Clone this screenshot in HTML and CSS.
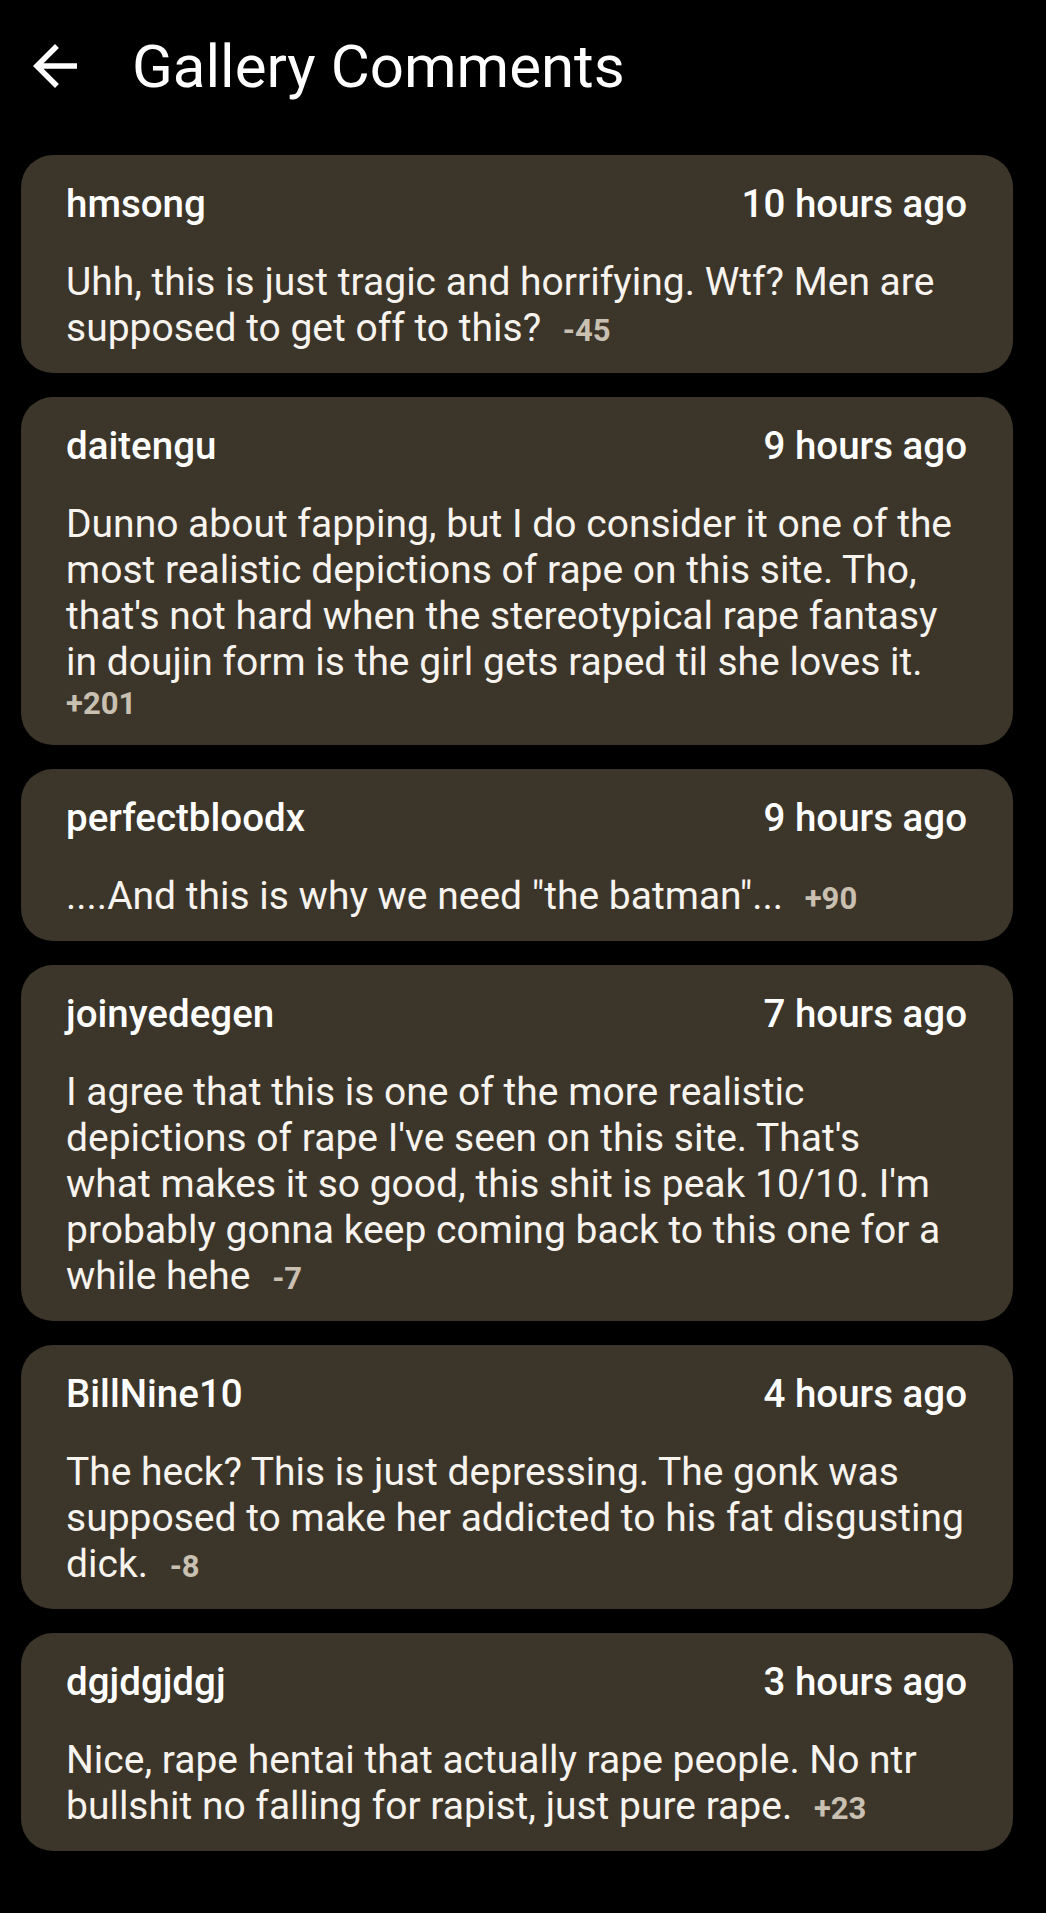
FILE: index.html
```html
<!DOCTYPE html>
<html lang="en">
<head>
    <meta charset="UTF-8">
    <meta name="viewport" content="width=device-width, initial-scale=1.0">
    <title>Gallery Comments</title>
    <link rel="stylesheet" href="styles.css">
</head>
<body>
    <header class="topbar">
        <button class="back" aria-label="Back">
            <svg viewBox="0 0 24 24" width="66" height="66"><path fill="#fff" d="M20 11H7.83l5.59-5.59L12 4l-8 8 8 8 1.41-1.41L7.83 13H20v-2z"/></svg>
        </button>
        <h1>Gallery Comments</h1>
    </header>
    <main class="list">
        <div class="card">
            <div class="head"><span class="user">hmsong</span><span class="time">10 hours ago</span></div>
            <p class="body"><span class="text">Uhh, this is just tragic and horrifying. Wtf? Men are supposed to get off to this?</span> <span class="score">-45</span></p>
        </div>
        <div class="card">
            <div class="head"><span class="user">daitengu</span><span class="time">9 hours ago</span></div>
            <p class="body"><span class="text">Dunno about fapping, but I do consider it one of the most realistic depictions of rape on this site. Tho, that's not hard when the stereotypical rape fantasy in doujin form is the girl gets raped til she loves it.</span> <span class="score">+201</span></p>
        </div>
        <div class="card">
            <div class="head"><span class="user">perfectbloodx</span><span class="time">9 hours ago</span></div>
            <p class="body"><span class="text">....And this is why we need "the batman"...</span> <span class="score">+90</span></p>
        </div>
        <div class="card">
            <div class="head"><span class="user">joinyedegen</span><span class="time">7 hours ago</span></div>
            <p class="body"><span class="text">I agree that this is one of the more realistic depictions of rape I've seen on this site. That's<br>what makes it so good, this shit is peak 10/10. I'm probably gonna keep coming back to this one for a while hehe</span> <span class="score">-7</span></p>
        </div>
        <div class="card">
            <div class="head"><span class="user">BillNine10</span><span class="time">4 hours ago</span></div>
            <p class="body"><span class="text">The heck? This is just depressing. The gonk was supposed to make her addicted to his fat disgusting dick.</span> <span class="score">-8</span></p>
        </div>
        <div class="card">
            <div class="head"><span class="user">dgjdgjdgj</span><span class="time">3 hours ago</span></div>
            <p class="body"><span class="text">Nice, rape hentai that actually rape people. No ntr bullshit no falling for rapist, just pure rape.</span> <span class="score">+23</span></p>
        </div>
    </main>
</body>
</html>
```

FILE: styles.css
```css
*{
    margin:0;
    padding:0;
    box-sizing: border-box;
}
body{
    background-color: #000;
    color: #f7f3ee;
    font-family: Roboto, "Noto Sans", sans-serif;
}

.topbar{
    height: 132px;
    display: flex;
    align-items: center;
    padding-left: 22px;
}
.back{
    width: 66px;
    height: 66px;
    border: none;
    background: none;
    display: flex;
}
.topbar h1{
    margin-left: 44px;
    font-size: 60px;
    font-weight: 400;
    color: #fff;
}

.list{
    display: flex;
    flex-direction: column;
    gap: 24px;
    padding: 23px 33px 40px 21px;
}
.card{
    background-color: #3c352a;
    border-radius: 32px;
    padding: 26px 46px 22px 45px;
}
.head{
    display: flex;
    justify-content: space-between;
    font-size: 38.5px;
    line-height: 46px;
    font-weight: 500;
    color: #fff;
}
.body{
    margin-top: 32px;
    font-size: 31px;
    line-height: 38px;
    word-spacing: 14px;
}
.text{
    font-size: 39px;
    line-height: 46px;
    word-spacing: normal;
}
.score{
    font-size: 31px;
    font-weight: 700;
    color: #c9c0b2;
}
```
